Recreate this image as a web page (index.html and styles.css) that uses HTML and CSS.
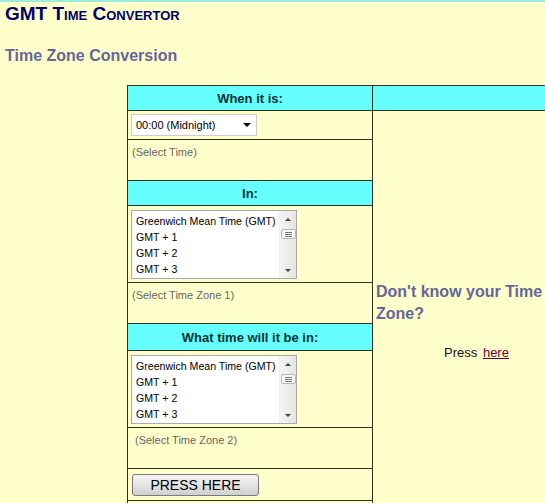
FILE: index.html
```html
<!DOCTYPE html>
<html lang="en">
<head>
<meta charset="utf-8">
<title>GMT Time Convertor</title>
<link rel="stylesheet" href="styles.css">
</head>
<body>
<h1 class="title">GMT Time Convertor</h1>
<h2 class="subtitle">Time Zone Conversion</h2>
<table class="conv">
  <tr class="head-row">
    <th class="head">When it is:</th>
    <th class="head side-head"></th>
  </tr>
  <tr class="ctl-row">
    <td class="ctl">
      <div class="dropdown"><span class="dd-text">00:00 (Midnight)</span><span class="caret"></span></div>
    </td>
    <td class="side" rowspan="10">
      <h3 class="side-q">Don't know your Time Zone?</h3>
      <p class="side-press">Press <a href="#" class="side-link">here</a></p>
    </td>
  </tr>
  <tr class="hint-row"><td class="hint">(Select Time)</td></tr>
  <tr class="head-row"><th class="head">In:</th></tr>
  <tr class="list-row">
    <td class="ctl">
      <div class="listbox">
        <ul class="items">
          <li>Greenwich Mean Time (GMT)</li>
          <li>GMT + 1</li>
          <li>GMT + 2</li>
          <li>GMT + 3</li>
        </ul>
        <div class="sbar">
          <span class="arr up"></span>
          <span class="thumb"><span class="grip"></span></span>
          <span class="arr down"></span>
        </div>
      </div>
    </td>
  </tr>
  <tr class="hint-row"><td class="hint">(Select Time Zone 1)</td></tr>
  <tr class="head-row tall"><th class="head">What time will it be in:</th></tr>
  <tr class="list-row">
    <td class="ctl">
      <div class="listbox">
        <ul class="items">
          <li>Greenwich Mean Time (GMT)</li>
          <li>GMT + 1</li>
          <li>GMT + 2</li>
          <li>GMT + 3</li>
        </ul>
        <div class="sbar">
          <span class="arr up"></span>
          <span class="thumb"><span class="grip"></span></span>
          <span class="arr down"></span>
        </div>
      </div>
    </td>
  </tr>
  <tr class="hint-row"><td class="hint hint2">(Select Time Zone 2)</td></tr>
  <tr class="btn-row"><td class="ctl"><button class="press" type="button">PRESS HERE</button></td></tr>
  <tr class="blank-row"><td class="blank">&nbsp;</td></tr>
</table>
</body>
</html>
```
FILE: styles.css
```css
html, body {
  overflow: hidden;
}
body {
  margin: 0;
  padding: 0 5px;
  background: #ffffcc;
  border-top: 2px solid #99eedd;
  font-family: "Liberation Sans", Arial, sans-serif;
  color: #000;
}
.title {
  margin: 1px 0 0;
  font-size: 19px;
  line-height: 22px;
  font-weight: bold;
  font-variant: small-caps;
  color: #000066;
}
.subtitle {
  margin: 21px 0 0;
  font-size: 16px;
  line-height: 20px;
  font-weight: bold;
  color: #666699;
}
.conv {
  margin: 19px 0 0 122px;
  border-collapse: collapse;
  width: 455px;
  table-layout: fixed;
}
.conv td, .conv th {
  border: 1px solid #333322;
  padding: 0;
}
.conv tr > :first-child {
  width: 244px;
}
.conv .head {
  background: #66ffff;
  height: 24px;
  font-size: 13px;
  font-weight: bold;
  color: #003333;
  text-align: center;
  vertical-align: middle;
}
.conv .tall .head {
  height: 26px;
}
.conv .ctl-row .ctl {
  height: 28px;
  padding: 0 0 0 3px;
  vertical-align: middle;
}
.dropdown {
  height: 20px;
  border: 1px solid #cccccc;
  background: #fff;
  display: flex;
  align-items: center;
  justify-content: space-between;
  padding: 0 5px 0 4px;
  box-sizing: content-box;
  width: 115px;
  font-size: 11px;
}
.caret {
  width: 0;
  height: 0;
  border-left: 4px solid transparent;
  border-right: 4px solid transparent;
  border-top: 4px solid #000;
}
.conv .hint {
  height: 41px;
  padding: 6px 0 0 4px;
  box-sizing: border-box;
  vertical-align: top;
  font-size: 11px;
  line-height: 13px;
  color: #666666;
}
.conv .hint2 {
  padding-left: 7px;
}
.conv .list-row .ctl {
  height: 77px;
  padding: 4px 0 0 3px;
  vertical-align: top;
  box-sizing: border-box;
}
.listbox {
  width: 164px;
  height: 67px;
  border: 1px solid #a5acb2;
  background: #fff;
  display: flex;
}
.items {
  flex: 1;
  list-style: none;
  margin: 0;
  padding: 2px 0 0 4px;
  font-size: 10.6px;
  line-height: 16px;
  white-space: nowrap;
  overflow: hidden;
}
.sbar {
  width: 17px;
  flex: none;
  background: linear-gradient(to right, #f4f4f2, #e6e6e0);
  border-left: 1px solid #eeeeea;
  display: flex;
  flex-direction: column;
  align-items: center;
  padding: 7px 0 6px;
  box-sizing: border-box;
}
.arr {
  width: 0;
  height: 0;
  border-left: 3px solid transparent;
  border-right: 3px solid transparent;
}
.arr.up {
  border-bottom: 3px solid #444;
}
.arr.down {
  border-top: 3px solid #444;
  margin-top: auto;
}
.thumb {
  margin-top: 8px;
  width: 13px;
  height: 8px;
  border: 1px solid #b8b8b0;
  border-radius: 2px;
  background: #f6f6f4;
  display: flex;
  align-items: center;
  justify-content: center;
}
.grip {
  width: 7px;
  height: 5px;
  background: repeating-linear-gradient(to bottom, #777 0, #777 1px, transparent 1px, transparent 2px);
}
.conv .btn-row .ctl {
  height: 31px;
  padding: 0 0 0 4px;
  vertical-align: middle;
}
.press {
  width: 127px;
  height: 22px;
  margin: 0;
  padding: 0;
  border: 1px solid #7a7a7a;
  border-radius: 3px;
  background: linear-gradient(to bottom, #f4f4f4, #e4e4e4 50%, #cfcfcf);
  font-family: "Liberation Sans", Arial, sans-serif;
  font-size: 14px;
  color: #000;
}
.conv .blank {
  height: 20px;
  font-size: 11px;
}
.conv .side {
  vertical-align: top;
  padding: 170px 4px 0 3px;
}
.side-q {
  margin: 0;
  font-size: 16px;
  line-height: 22px;
  font-weight: bold;
  color: #666699;
}
.side-press {
  margin: 20px 0 0;
  text-align: center;
  font-size: 13px;
  line-height: 16px;
  color: #111;
}
.side-link {
  color: #660033;
  margin-left: 2px;
}
```
